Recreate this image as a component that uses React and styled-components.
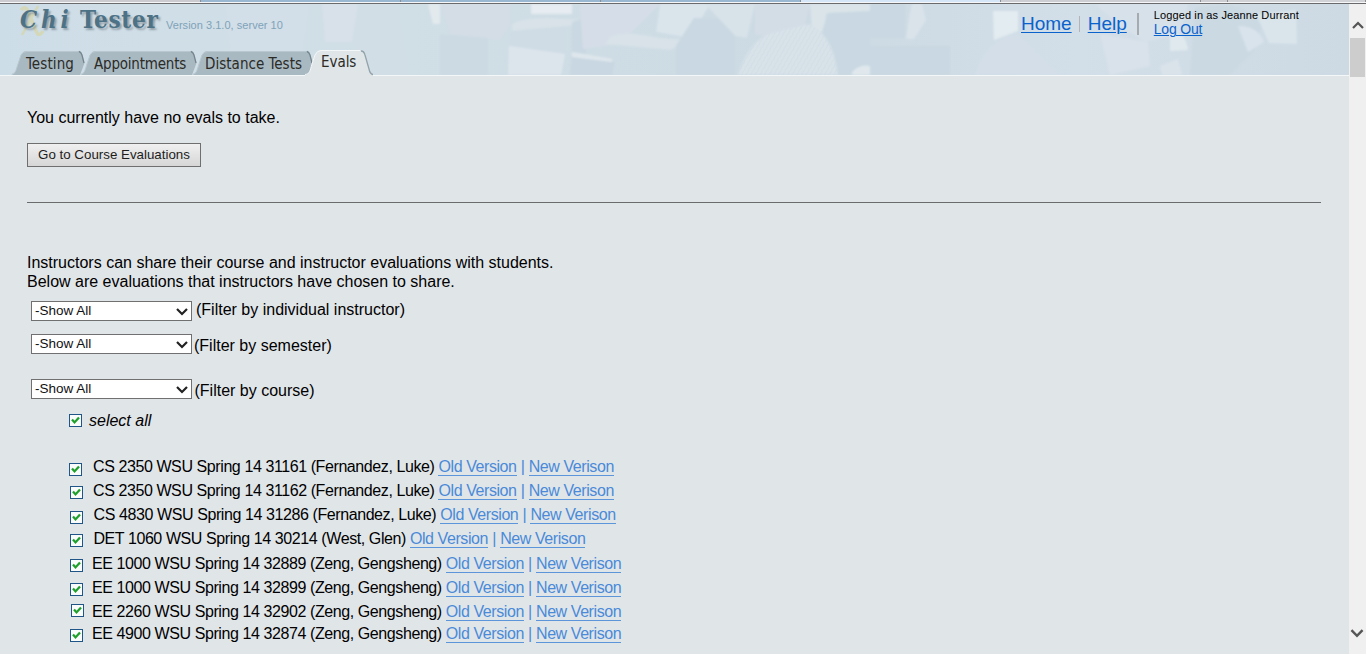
import React from 'react';
import styled, { createGlobalStyle } from 'styled-components';

const GlobalStyle = createGlobalStyle`
  * { box-sizing: border-box; }
  body {
    margin: 0;
    overflow: hidden;
    background: #e0e5e8;
    color: #000;
    font: 16px/19px "Liberation Sans", Arial, sans-serif;
  }
`;

const Window = styled.div`
  width: 1366px;
  height: 654px;
  display: flex;
  flex-direction: column;
  overflow: hidden;
`;

const BrowserStrip = styled.div`
  flex: none;
  height: 4px;
  display: flex;
  background: #f4f6f8;
  border-bottom: 1px solid #6a6a6c;
`;

const StripSegment = styled.div`
  height: 2px;
  width: ${p => p.$width}px;
  background: ${p => p.$color};
  border-right: 1px solid #8d8f94;
`;

const Body = styled.div`
  flex: 1;
  min-height: 0;
  display: flex;
`;

const Main = styled.main`
  width: 1349px;
  background: #e0e5e8;
`;

const Header = styled.header`
  position: relative;
  height: 72px;
  display: flex;
  justify-content: space-between;
  background: #d0dde5;
`;

const Backdrop = styled.svg`
  position: absolute;
  inset: 0;
  display: block;
`;

const Brand = styled.div`
  position: relative;
  display: flex;
  flex-direction: column;
  justify-content: space-between;
`;

const LogoRow = styled.div`
  display: flex;
  height: 36px;
  padding-left: 20px;
`;

const Logo = styled.div`
  position: relative;
  display: flex;
  width: 146px;
  font: bold 24px/32px "DejaVu Serif Condensed", "DejaVu Serif", Georgia, serif;
  font-stretch: condensed;
  color: #4d7286;
  text-shadow: 2px 2px 2px rgba(70, 85, 95, 0.45);
`;

const LogoMark = styled.svg`
  position: absolute;
  left: -1px;
  top: 0;
`;

const Chi = styled.span`
  position: relative;
  width: 60px;
  font-style: italic;
  letter-spacing: 3.8px;
`;

const Tester = styled.span`
  position: relative;
  letter-spacing: 0.7px;
`;

const Version = styled.span`
  padding-top: 12px;
  font-size: 11px;
  letter-spacing: 0.03px;
  color: #7fa3b8;
`;

const Tabs = styled.nav`
  display: flex;
  height: 26px;
  padding-left: 11px;
`;

const TabBox = styled.a`
  position: relative;
  width: ${p => p.$width}px;
  margin-right: ${p => p.$overlap}px;
  padding-left: ${p => p.$inset}px;
  font: 15px/26px "DejaVu Sans Condensed", "DejaVu Sans", Tahoma, sans-serif;
  font-stretch: condensed;
  letter-spacing: ${p => p.$spacing}px;
  white-space: nowrap;
  color: #2b2b27;
`;

const TabShape = styled.svg`
  position: absolute;
  left: 0;
  top: 0;
  display: block;
`;

const TabLabel = styled.span`
  position: relative;
  top: ${p => (p.$active ? -1 : 1)}px;
`;

const Account = styled.div`
  position: relative;
  display: flex;
  width: 328px;
`;

const HeaderLink = styled.a`
  height: 22px;
  margin-top: 9px;
  font-size: 19px;
  line-height: 22px;
  color: #0a63cc;
  text-decoration: underline;
  text-decoration-thickness: 1px;
  text-underline-offset: 2px;
`;

const Divider = styled.span`
  width: ${p => p.$width}px;
  height: ${p => p.$height}px;
  margin: ${p => p.$margin};
  background: ${p => p.$color};
`;

const User = styled.div`
  display: flex;
  flex-direction: column;
  padding-top: 5px;
  font-size: 11px;
  line-height: 13px;
  letter-spacing: 0.12px;
`;

const LogOut = styled.a`
  font-size: 14px;
  line-height: 15px;
  letter-spacing: -0.2px;
  color: #0a63cc;
  text-decoration: underline;
  text-decoration-thickness: 1px;
  text-underline-offset: 1px;
`;

const Content = styled.section`
  padding: 32px 28px 0 27px;
`;

const Paragraph = styled.p`
  margin: 0 0 ${p => p.$after || 0}px;
`;

const Button = styled.button`
  display: block;
  width: 174px;
  height: 24px;
  margin: 16px 0 35px;
  padding: 0 0 1px;
  border: 1px solid #6f6f6f;
  border-radius: 0;
  background: linear-gradient(#f0f0f0, #d6d6d6);
  font: 13.33px/20px "Liberation Sans", Arial, sans-serif;
  color: #1d1d1d;
`;

const Rule = styled.hr`
  height: 1px;
  margin: 0 0 50px;
  border: 0;
  background: #696b6d;
`;

const Filter = styled.label`
  display: flex;
  align-items: flex-start;
  height: ${p => p.$height}px;
  padding-left: 4px;
`;

const SelectBox = styled.span`
  width: 161px;
  height: 20px;
  display: flex;
  justify-content: space-between;
  align-items: center;
  padding: 0 3px;
  border: 1px solid #707070;
  background: #fff;
  font-size: 13.5px;
  line-height: 18px;
  color: #111;
`;

const FilterText = styled.span`
  margin: ${p => p.$shift}px 0 0 ${p => p.$gap}px;
`;

const SelectAll = styled.label`
  display: flex;
  height: 46px;
  padding-left: 42px;
  line-height: 17px;
  font-style: italic;
`;

const CheckBox = styled.span`
  flex: none;
  width: 13px;
  height: 13px;
  margin-top: ${p => p.$top}px;
  border: 1px solid #1f5587;
  background: #fafcfb;

  svg { display: block; }
`;

const SelectText = styled.span`
  margin-left: 7px;
`;

const EvalRow = styled.div`
  display: flex;
  height: ${p => p.$height}px;
  padding-left: ${p => p.$box - 27}px;
  line-height: 18px;
`;

const EvalText = styled.span`
  margin-left: ${p => p.$gap}px;
  letter-spacing: -0.41px;
  white-space: pre;
`;

const EvalLinks = styled.span`
  margin-left: 4px;
  display: flex;
  gap: 4.2px;
  letter-spacing: -0.42px;
  white-space: nowrap;
  color: #4a8ad8;
`;

const EvalLink = styled.a`
  height: 18px;
  border-bottom: 1px solid #5c95da;
`;

const ScrollBar = styled.aside`
  width: 17px;
  display: flex;
  flex-direction: column;
  justify-content: space-between;
  padding: 17px 1px 16px;
  background: #f0f0f0;
`;

const ScrollTop = styled.div`
  display: flex;
  flex-direction: column;
  align-items: center;
  gap: 8px;
`;

const ScrollThumb = styled.div`
  width: 15px;
  height: 39px;
  background: #cdcdcd;
`;

const STRIP = [
  [201, '#cbcbd0'], [200, '#9bb8d2'], [200, '#9bb8d2'], [200, '#9bb8d2'],
  [200, '#d6e6f9'], [200, '#cdced3'], [27, '#cdced3'], [138, '#d0d2d6'],
];

const TABS = [
  { label: 'Testing', width: 74, overlap: -5, inset: 15, spacing: 0.12 },
  { label: 'Appointments', width: 117, overlap: -5, inset: 14, spacing: -0.2 },
  { label: 'Distance Tests', width: 121, overlap: -8, inset: 13, spacing: 0.03 },
  { label: 'Evals', width: 68, overlap: 0, inset: 16, spacing: -0.05, active: true },
];

const FILTERS = [
  { text: '(Filter by individual instructor)', height: 33, shift: -1, gap: 4 },
  { text: '(Filter by semester)', height: 45, shift: 2, gap: 2 },
  { text: '(Filter by course)', height: 33, shift: 2, gap: 2.5 },
];

const EVALS = [
  { text: 'CS 2350 WSU Spring 14 31161 (Fernandez, Luke)', height: 24, box: 69, top: 5, gap: 11 },
  { text: 'CS 2350 WSU Spring 14 31162 (Fernandez, Luke)', height: 24, box: 70, top: 4, gap: 10 },
  { text: 'CS 4830 WSU Spring 14 31286 (Fernandez, Luke)', height: 24, box: 70, top: 5, gap: 10.6 },
  { text: 'DET 1060 WSU Spring 14 30214 (West, Glen)', height: 25, box: 70, top: 4, gap: 10.4 },
  { text: 'EE 1000 WSU Spring 14 32889 (Zeng, Gengsheng)', height: 24, box: 70, top: 4, gap: 9 },
  { text: 'EE 1000 WSU Spring 14 32899 (Zeng, Gengsheng)', height: 24, box: 70, top: 4, gap: 9 },
  { text: 'EE 2260 WSU Spring 14 32902 (Zeng, Gengsheng)', height: 22, box: 71, top: 1, gap: 8 },
  { text: 'EE 4900 WSU Spring 14 32874 (Zeng, Gengsheng)', height: 20, box: 70, top: 4, gap: 9 },
];

function Check({ top }) {
  return (
    <CheckBox $top={top}>
      <svg width="11" height="11" viewBox="0 0 11 11">
        <path d="M2 4.6 L4.5 7.4 L9 2.4" fill="none" stroke="#1fa02c" strokeWidth="2.3" />
      </svg>
    </CheckBox>
  );
}

function Chevron({ up, color, width, height }) {
  return (
    <svg width={width} height={height} viewBox="0 0 12 9">
      <path d={up ? 'M1 7 L6 2 L11 7' : 'M1 2 L6 7 L11 2'} fill="none" stroke={color} strokeWidth="2.2" />
    </svg>
  );
}

function Tab({ label, width: w, overlap, inset, spacing, active }) {
  return (
    <TabBox $width={w} $overlap={overlap} $inset={inset} $spacing={spacing}>
      <TabShape width={w} height="26" viewBox={`0 0 ${w} 26`}>
        {active ? (
          <>
            <path d={`M0 26 V25 C5 24 5 21 7 14 L10 5 Q12 0.5 16 0.5 H${w - 13} Q${w - 9} 0.5 ${w - 8} 5 L${w - 4} 19 Q${w - 3} 24 ${w} 25 V26 Z`} fill="#e0e5e8" />
            <path d={`M0 24.5 C5 24 5 21 7 14 L10 5 Q12 0.5 16 0.5 H${w - 13}`} fill="none" stroke="#f4f7f8" />
            <path d={`M${w - 12} 1 Q${w - 9} 1 ${w - 8} 5 L${w - 4} 19 Q${w - 3} 24 ${w} 24.5`} fill="none" stroke="#93a3ab" strokeWidth="1.3" />
          </>
        ) : (
          <>
            <path d={`M0 25 C5 24 5 20 7 14 L10 5 Q12 1 16 1 H${w - 7} Q${w - 4} 1 ${w - 3} 5 L${w - 0.5} 13 L${w - 5} 25 Z`} fill="#a9b9c2" />
            <path d={`M1 24 C5 23 5 20 7 14 L10 5 Q12 1.5 16 1.5 H${w - 7}`} fill="none" stroke="#b9c8d0" />
            <path d={`M${w - 6} 1.5 Q${w - 4} 2 ${w - 3} 5 L${w - 1} 13`} fill="none" stroke="#75858e" strokeWidth="1.3" />
          </>
        )}
      </TabShape>
      <TabLabel $active={active}>{label}</TabLabel>
    </TabBox>
  );
}

function ClassroomBackdrop() {
  return (
    <Backdrop width="1349" height="72" viewBox="0 0 1349 72">
      <defs>
        <linearGradient id="wash" x1="0" x2="1">
          <stop offset="0" stopColor="#cdddE7" />
          <stop offset="0.12" stopColor="#d0dee7" />
          <stop offset="0.3" stopColor="#d0dee6" />
          <stop offset="0.6" stopColor="#ccdae3" />
          <stop offset="0.8" stopColor="#d2dee8" />
          <stop offset="1" stopColor="#cddae4" />
        </linearGradient>
        <pattern id="knit" width="6" height="4" patternUnits="userSpaceOnUse" patternTransform="rotate(-60)">
          <path d="M0 1 Q3 3 6 1" fill="none" stroke="#cbd8e0" />
        </pattern>
        <filter id="soft"><feGaussianBlur stdDeviation="1.2" /></filter>
      </defs>
      <rect width="1349" height="72" fill="url(#wash)" />
      <g filter="url(#soft)">
        <path d="M225 0 H310 L300 72 H232Z" fill="#d2dee8" />
        <path d="M322 0 H358 L352 38 H325Z" fill="#d8e1ea" />
        <path d="M358 6 Q378 -6 398 2 L408 72 H352Z" fill="#d2dee6" />
        <path d="M428 0 H440 V20 H433Z" fill="#e2eaee" />
        <path d="M441 0 H510 V22 L500 36 L450 30Z" fill="#d4dde6" />
        <path d="M440 30 L488 34 V71 H440Z" fill="#ccdae3" />
        <path d="M511 26 L565 23 V52 L520 42 L505 72Z" fill="#cfdce5" />
        <path d="M531 0 H572 V10 H531Z" fill="#e6ecf1" />
        <path d="M512 20 Q530 10 590 17 V20 L512 27Z" fill="#d8e2e8" />
        <path d="M572 18 L586 14 V50 L572 48Z" fill="#c9d8e2" />
        <path d="M509 42 L565 50 L561 71 H508Z" fill="#dde5ec" />
        <path d="M580 0 H660 L620 40 L583 45Z" fill="#d5dee8" />
        <path d="M572 50 L615 58 L612 71 H570Z" fill="#c9d7e2" />
        <path d="M572 48 L612 55 V58 L572 53Z" fill="#dfe7ec" />
        <path d="M610 33 Q625 26 660 34 L695 36 L670 46 L605 40Z" fill="#d8e2e8" />
        <path d="M660 0 H710 L690 34 L656 28Z" fill="#dae4eb" />
        <path d="M694 14 L735 16 V71 H676 V42Z" fill="#c9d8e2" />
        <path d="M705 0 H755 L747 34 L735 32Z" fill="#d8e2e9" />
        <path d="M755 0 H810 L803 28 L780 36 L755 30Z" fill="#d3dde6" />
        <path d="M810 0 H870 V8 L826 10 L825 28 H812Z" fill="#dae4e9" />
        <path d="M738 71 Q750 32 778 27 L808 20 Q832 28 838 71Z" fill="#d8e2e9" />
        <path d="M822 28 L828 9 L870 7 V71 H838 Q837 45 822 28Z" fill="#c9d8e2" />
        <path d="M870 0 H905 V34 H870Z M870 42 H950 V71 H870Z" fill="#c9d8e2" />
        <path d="M912 0 H922 L926 16 L914 35 H906 L909 14Z" fill="#dae3ea" />
        <path d="M852 68 Q860 60 870 62 V71 H852Z" fill="#e0e8ed" />
        <path d="M993 7 H1018 V27 L994 36Z" fill="#e3ecf0" />
        <path d="M975 71 Q985 35 1018 30 L1060 71Z" fill="#d3dee8" />
        <path d="M1095 0 H1188 L1180 30 L1145 38 L1120 22Z" fill="#d7e1ea" />
        <path d="M1100 30 L1148 38 L1150 62 L1110 71Z" fill="#d9e2ea" />
        <path d="M1170 32 Q1185 25 1188 46 L1170 47Z" fill="#e0eaee" />
        <path d="M1195 4 Q1245 -6 1262 20 L1255 46 L1230 71 H1190Z" fill="#cbd9e3" />
        <path d="M1256 10 L1296 6 L1297 40 L1269 39Z" fill="#dae5eb" />
        <path d="M1238 22 Q1258 22 1264 38 L1248 48Z" fill="#d9e3ec" />
        <path d="M1160 62 L1178 55 L1182 71 H1162Z" fill="#dae3ea" />
      </g>
      <path d="M738 71 Q750 32 778 27 L808 20 Q832 28 838 71Z" fill="url(#knit)" opacity="0.5" />
      <rect y="71" width="1349" height="1" fill="#f4f7f8" />
    </Backdrop>
  );
}

export default function App() {
  return (
    <Window>
      <GlobalStyle />
      <BrowserStrip>
        {STRIP.map(([width, color], i) => <StripSegment key={i} $width={width} $color={color} />)}
      </BrowserStrip>
      <Body>
        <Main>
          <Header>
            <ClassroomBackdrop />
            <Brand>
              <LogoRow>
                <Logo>
                  <LogoMark width="26" height="34" viewBox="0 0 26 34">
                    <path d="M2 6 Q6 1 9 7 L17 27 Q20 34 24 27" fill="none" stroke="#d4d8b8" strokeWidth="3.5" />
                    <path d="M19 2 L3 31" fill="none" stroke="#d4d8b8" strokeWidth="2.5" />
                  </LogoMark>
                  <Chi>Chi</Chi>
                  <Tester>Tester</Tester>
                </Logo>
                <Version>Version 3.1.0, server 10</Version>
              </LogoRow>
              <Tabs>
                {TABS.map(tab => <Tab key={tab.label} {...tab} />)}
              </Tabs>
            </Brand>
            <Account>
              <HeaderLink>Home</HeaderLink>
              <Divider $width={1} $height={16} $margin="12px 8px 0 7px" $color="#b5b3b8" />
              <HeaderLink>Help</HeaderLink>
              <Divider $width={2} $height={22} $margin="9px 15px 0 10px" $color="#a8abae" />
              <User>
                <span>Logged in as Jeanne Durrant</span>
                <LogOut>Log Out</LogOut>
              </User>
            </Account>
          </Header>
          <Content>
            <Paragraph>You currently have no evals to take.</Paragraph>
            <Button>Go to Course Evaluations</Button>
            <Rule />
            <Paragraph>Instructors can share their course and instructor evaluations with students.</Paragraph>
            <Paragraph $after={10}>Below are evaluations that instructors have chosen to share.</Paragraph>
            {FILTERS.map(f => (
              <Filter key={f.text} $height={f.height}>
                <SelectBox>
                  -Show All
                  <Chevron color="#222" width={12} height={9} />
                </SelectBox>
                <FilterText $shift={f.shift} $gap={f.gap}>{f.text}</FilterText>
              </Filter>
            ))}
            <SelectAll>
              <Check top={2} />
              <SelectText>select all</SelectText>
            </SelectAll>
            {EVALS.map(e => (
              <EvalRow key={e.text} $height={e.height} $box={e.box}>
                <Check top={e.top} />
                <EvalText $gap={e.gap}>{e.text}</EvalText>
                <EvalLinks>
                  <EvalLink>Old Version</EvalLink>
                  <span>|</span>
                  <EvalLink>New Verison</EvalLink>
                </EvalLinks>
              </EvalRow>
            ))}
          </Content>
        </Main>
        <ScrollBar>
          <ScrollTop>
            <Chevron up color="#555" width={12} height={9} />
            <ScrollThumb />
          </ScrollTop>
          <Chevron color="#555" width={14} height={10} />
        </ScrollBar>
      </Body>
    </Window>
  );
}
